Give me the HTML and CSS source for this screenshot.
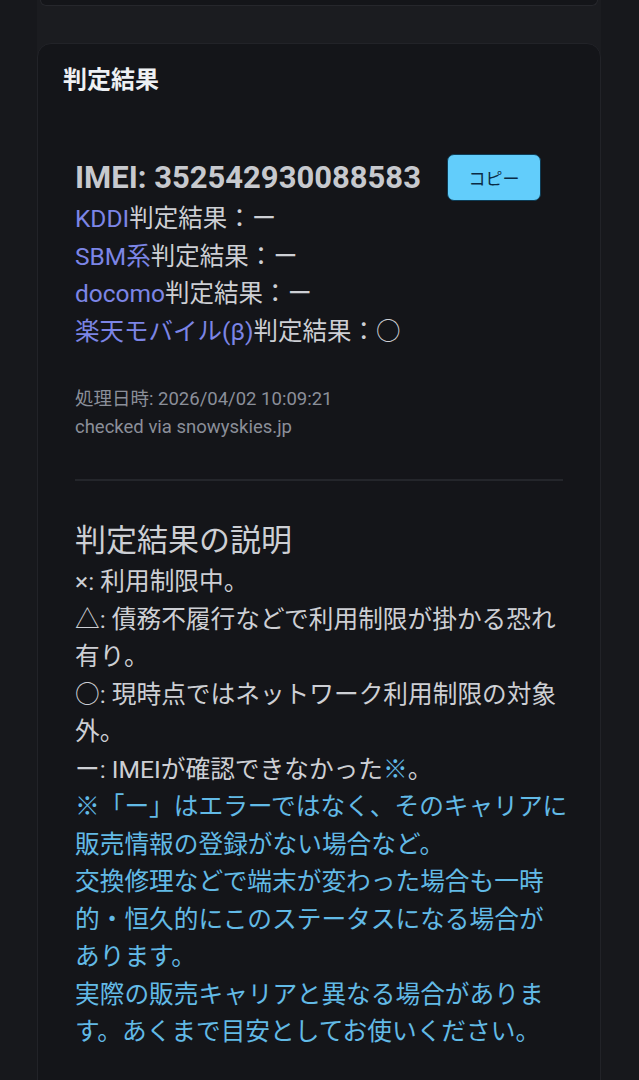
FILE: index.html
```html
<!DOCTYPE html>
<html lang="ja">
<head>
    <meta charset="UTF-8">
    <meta name="viewport" content="width=device-width, initial-scale=1.0">
    <title>判定結果</title>
    <link rel="stylesheet" href="styles.css">
</head>
<body>
    <div class="page">
        <div class="prev-card"></div>

        <div class="card">
            <h2 class="card-title">判定結果</h2>

            <div class="result">
                <div class="imei-row">
                    <span class="imei">IMEI: 352542930088583</span>
                    <button class="copy-btn">コピー</button>
                </div>

                <div class="carrier-list">
                    <div><a href="#">KDDI</a>判定結果：ー</div>
                    <div><a href="#">SBM系</a>判定結果：ー</div>
                    <div><a href="#">docomo</a>判定結果：ー</div>
                    <div><a href="#">楽天モバイル(β)</a>判定結果：○</div>
                </div>

                <div class="meta">
                    <div>処理日時: 2026/04/02 10:09:21</div>
                    <div>checked via snowyskies.jp</div>
                </div>

                <hr class="divider">

                <h3 class="legend-title">判定結果の説明</h3>
                <div class="legend">
                    <div>×: 利用制限中。</div>
                    <div>△: 債務不履行などで利用制限が掛かる恐れ<br>有り。</div>
                    <div>○: 現時点ではネットワーク利用制限の対象<br>外。</div>
                    <div>ー: IMEIが確認できなかった<span class="note-mark">※</span>。</div>
                    <div class="note">※「ー」はエラーではなく、そのキャリアに<br>販売情報の登録がない場合など。</div>
                    <div class="note">交換修理などで端末が変わった場合も一時<br>的・恒久的にこのステータスになる場合が<br>あります。</div>
                    <div class="note">実際の販売キャリアと異なる場合がありま<br>す。あくまで目安としてお使いください。</div>
                </div>
            </div>
        </div>
    </div>
</body>
</html>
```

FILE: styles.css
```css
* {
    box-sizing: border-box;
}

body {
    margin: 0;
    background-color: #17181c;
    font-family: Roboto, "Noto Sans CJK JP", sans-serif;
    color: #cdcfd4;
    overflow: hidden;
}

.page {
    width: 564px;
    height: 1080px;
    margin-left: 37px;
    background-color: #1b1c20;
    overflow: hidden;
}

.prev-card {
    height: 6px;
    margin: 0 3px;
    background-color: #141519;
    border: 1px solid #26272c;
    border-top: none;
    border-radius: 0 0 10px 10px;
}

.card {
    margin-top: 37px;
    padding: 20px 25px 40px;
    background-color: #141519;
    border: 1px solid #222328;
    border-radius: 14px;
    min-height: 1100px;
}

.card-title {
    margin: 0;
    font-size: 24px;
    line-height: 32px;
    font-weight: 700;
    color: #eef0f3;
}

.result {
    padding: 0 12px;
}

.imei-row {
    display: flex;
    align-items: center;
    gap: 26px;
    margin-top: 58px;
}

.imei {
    font-size: 31px;
    font-weight: 700;
    color: #c7c9ce;
    line-height: 47px;
}

.copy-btn {
    width: 94px;
    height: 47px;
    padding: 0;
    background-color: #62cdfb;
    border: 1px solid #0e3c55;
    border-radius: 7px;
    color: #0b2b44;
    font-family: "Noto Sans CJK JP", sans-serif;
    font-size: 17px;
}

.carrier-list {
    margin-top: -1px;
    font-size: 24.5px;
    line-height: 37.6px;
    color: #cdcfd4;
}

.carrier-list a {
    color: #7c85e6;
    text-decoration: none;
}

.meta {
    margin-top: 35px;
    font-size: 18.5px;
    line-height: 28px;
    color: #8b8f99;
}

.divider {
    margin: 38px 0 0;
    border: none;
    height: 2px;
    background-color: #24262b;
}

.legend-title {
    margin: 38px 0 0;
    font-size: 31px;
    line-height: 44px;
    font-weight: 400;
    color: #cdcfd4;
}

.legend {
    font-size: 24.7px;
    line-height: 37.5px;
    color: #cdcfd4;
    white-space: nowrap;
}

.note,
.note-mark {
    color: #62bae6;
}
```
